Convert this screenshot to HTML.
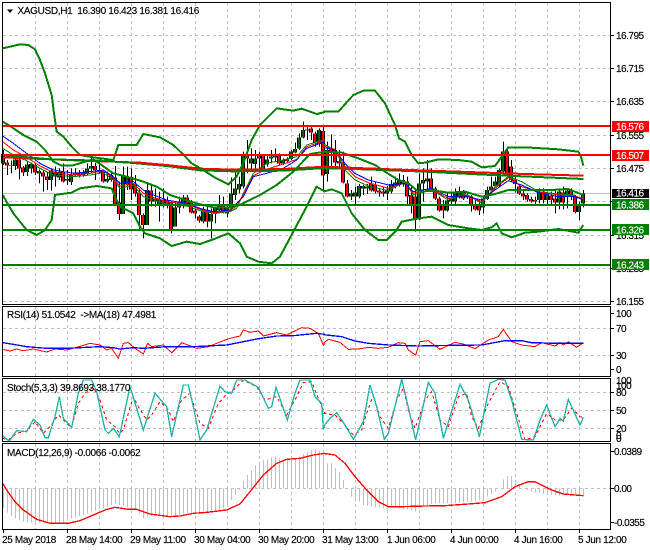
<!DOCTYPE html>
<html><head><meta charset="utf-8"><title>XAGUSD,H1</title>
<style>
html,body{margin:0;padding:0;background:#fff;width:650px;height:550px;overflow:hidden}
svg{display:block}
text{font-family:"Liberation Sans",sans-serif;font-size:10px;letter-spacing:-.5px;fill:#000;stroke:#000;stroke-width:.15px}
.d text{letter-spacing:-.35px}
.h text{letter-spacing:-.33px}
.w text{fill:#fff;stroke:#fff}
</style></head><body>
<svg width="650" height="550" viewBox="0 0 650 550" xmlns="http://www.w3.org/2000/svg">
<defs>
<path id="gb" d="M15.5 478V498M27.5 494V516M31.5 492V505M39.5 513V520M51.5 512V540M55.5 515V530M59.5 516V533M67.5 537V542M71.5 525V546M79.5 520V527M83.5 518V525M87.5 505V522M91.5 498V506M107.5 537V545M111.5 525V540M123.5 528V642M127.5 530V552M147.5 570V675M159.5 598V612M175.5 622V680M179.5 605V622M183.5 592V612M203.5 632V665M211.5 642V665M215.5 625V642M219.5 615V630M227.5 620V640M231.5 580V620M235.5 565V585M239.5 552V568M243.5 465V560M251.5 475V490M255.5 475V492M267.5 478V493M271.5 470V475M275.5 463V473M283.5 480V490M291.5 455V477M295.5 447V457M299.5 412V445M303.5 390V412M319.5 390V432M327.5 450V522M351.5 580V590M355.5 578V590M359.5 558V590M363.5 558V565M367.5 560V566M387.5 568V580M391.5 552V575M395.5 548V560M399.5 540V555M403.5 540V553M419.5 550V658M423.5 540V550M427.5 535V545M447.5 602V632M451.5 592V605M455.5 578V605M459.5 576V592M483.5 595V622M487.5 570V597M491.5 560V572M495.5 545V558M499.5 510V556M503.5 455V515M539.5 575V600M547.5 580V600M559.5 575V608M567.5 572V590M579.5 612V636M583.5 580V610"/>
<path id="rb" d="M3.5 462V490M7.5 488V496M11.5 495V497M19.5 478V506M23.5 503V517M35.5 495V518M43.5 517V530M47.5 530V540M63.5 514V544M75.5 518V525M95.5 498V510M99.5 510V517M103.5 514V545M115.5 533V612M119.5 607V642M131.5 531V568M135.5 550V580M139.5 578V645M143.5 645V675M151.5 572V605M155.5 595V605M163.5 598V612M167.5 600V610M171.5 607V692M187.5 592V610M191.5 608V638M195.5 632V640M199.5 650V662M207.5 637V665M223.5 618V635M247.5 463V475M259.5 468V475M263.5 468V508M279.5 462V490M287.5 478V483M307.5 388V392M311.5 385V398M315.5 400V428M323.5 393V527M331.5 448V458M335.5 450V488M339.5 483V490M343.5 490V548M347.5 550V590M371.5 550V572M375.5 555V575M379.5 572V578M383.5 575V580M407.5 545V590M411.5 585V618M415.5 590V660M431.5 535V568M435.5 565V595M439.5 595V632M443.5 618V632M463.5 575V595M467.5 585V592M471.5 590V618M475.5 618V628M479.5 618V632M507.5 455V525M511.5 500V540M515.5 538V552M519.5 560V580M523.5 580V590M527.5 585V598M531.5 597V605M535.5 600V605M543.5 575V600M551.5 588V600M555.5 595V608M563.5 578V608M571.5 572V588M575.5 590V636"/>
</defs>
<rect width="650" height="550" fill="#fff"/>
<!-- grid -->
<g stroke="#c0c0c0" stroke-width="1" stroke-dasharray="3 3" fill="none" shape-rendering="crispEdges">
<path d="M35.5 3V304M67.5 3V304M99.5 3V304M131.5 3V304M163.5 3V304M195.5 3V304M227.5 3V304M259.5 3V304M291.5 3V304M323.5 3V304M355.5 3V304M387.5 3V304M419.5 3V304M451.5 3V304M483.5 3V304M515.5 3V304M547.5 3V304M579.5 3V304"/>
<path d="M35.5 307V376M67.5 307V376M99.5 307V376M131.5 307V376M163.5 307V376M195.5 307V376M227.5 307V376M259.5 307V376M291.5 307V376M323.5 307V376M355.5 307V376M387.5 307V376M419.5 307V376M451.5 307V376M483.5 307V376M515.5 307V376M547.5 307V376M579.5 307V376"/>
<path d="M35.5 379V441M67.5 379V441M99.5 379V441M131.5 379V441M163.5 379V441M195.5 379V441M227.5 379V441M259.5 379V441M291.5 379V441M323.5 379V441M355.5 379V441M387.5 379V441M419.5 379V441M451.5 379V441M483.5 379V441M515.5 379V441M547.5 379V441M579.5 379V441"/>
<path d="M35.5 444V529M67.5 444V529M99.5 444V529M131.5 444V529M163.5 444V529M195.5 444V529M227.5 444V529M259.5 444V529M291.5 444V529M323.5 444V529M355.5 444V529M387.5 444V529M419.5 444V529M451.5 444V529M483.5 444V529M515.5 444V529M547.5 444V529M579.5 444V529"/>
<path d="M3 35.5H610M3 68.5H610M3 101.5H610M3 135.5H610M3 168.5H610M3 201.5H610M3 235.5H610M3 268.5H610M3 301.5H610"/>
<path d="M3 328.5H610M3 355.5H610"/>
<path d="M3 392.5H610M3 410.5H610M3 428.5H610"/>
<path d="M3 488.5H610"/>
</g>
<!-- bid line -->
<path d="M3 193.5H610" stroke="#c0c0c0" shape-rendering="crispEdges"/>
<!-- candles -->
<g transform="scale(1,.33333)" fill="none" shape-rendering="crispEdges">
<path stroke="#000" stroke-width="1" d="M3.5 450V495M7.5 480V525M11.5 482V520M15.5 470V510M19.5 472V538M23.5 498V528M27.5 485V528M31.5 488V520M35.5 490V525M39.5 508V550M43.5 510V575M47.5 515V570M51.5 505V572M55.5 500V560M59.5 505V540M63.5 490V547M67.5 510V555M71.5 505V555M75.5 505V530M79.5 510V532M83.5 510V530M87.5 490V526M91.5 470V520M95.5 488V540M99.5 480V520M103.5 512V548M107.5 515V548M111.5 520V545M115.5 498V614M119.5 545V660M123.5 500V640M127.5 500V570M131.5 505V600M135.5 525V590M139.5 565V690M143.5 640V715M147.5 548V675M151.5 555V620M155.5 565V620M159.5 575V665M163.5 565V622M167.5 590V625M171.5 605V700M175.5 605V680M179.5 590V640M183.5 585V625M187.5 585V615M191.5 600V640M195.5 625V655M199.5 645V668M203.5 620V670M207.5 620V682M211.5 625V715M215.5 620V670M219.5 585V640M223.5 590V640M227.5 612V652M231.5 532V622M235.5 510V600M239.5 530V580M243.5 455V565M247.5 420V520M251.5 445V515M255.5 450V505M259.5 455V505M263.5 462V515M267.5 465V500M271.5 450V490M275.5 445V485M279.5 460V495M283.5 475V495M287.5 472V490M291.5 450V480M295.5 428V460M299.5 400V450M303.5 365V415M307.5 378V420M311.5 378V420M315.5 395V440M319.5 385V440M323.5 380V575M327.5 425V545M331.5 403V505M335.5 420V505M339.5 450V500M343.5 455V550M347.5 540V592M351.5 570V600M355.5 560V612M359.5 552V595M363.5 555V585M367.5 552V582M371.5 530V575M375.5 545V580M379.5 565V590M383.5 560V590M387.5 558V600M391.5 540V580M395.5 530V565M399.5 520V560M403.5 525V560M407.5 530V612M411.5 560V640M415.5 570V695M419.5 520V660M423.5 505V605M427.5 480V575M431.5 505V570M435.5 560V600M439.5 590V635M443.5 600V655M447.5 575V635M451.5 575V612M455.5 565V615M459.5 560V595M463.5 570V600M467.5 580V597M471.5 585V635M475.5 600V632M479.5 600V645M483.5 590V640M487.5 560V600M491.5 530V575M495.5 530V560M499.5 505V560M503.5 425V525M507.5 440V530M511.5 480V545M515.5 530V578M519.5 555V585M523.5 570V600M527.5 580V605M531.5 590V608M535.5 590V612M539.5 565V610M543.5 565V610M547.5 575V612M551.5 575V612M555.5 570V640M559.5 565V628M563.5 560V628M567.5 565V625M571.5 565V600M575.5 585V640M579.5 605V660M583.5 570V622"/>
<g transform="translate(-.5,0)">
<use href="#gb" stroke="#000" stroke-width="4"/>
<use href="#rb" stroke="#000" stroke-width="4"/>
<use href="#gb" stroke="#006400" stroke-width="2"/>
<use href="#rb" stroke="#ff0000" stroke-width="2"/>
</g>
</g>
<!-- thin MAs left -->
<g transform="scale(.33333)" fill="none" stroke-width="3" shape-rendering="crispEdges">
<polyline stroke="#008000" points="8,445 40,465 80,482 120,505 160,525 220,530 270,525 310,518 340,540 360,565 400,555 430,590 460,600 500,612 560,618 600,632 640,640 690,635 710,625 730,580 760,520 800,490 850,480 890,470 920,435 975,418"/>
<polyline stroke="#ff0000" points="8,425 40,450 80,472 120,498 160,517 220,525 270,520 310,512 340,535 360,558 400,550 430,580 460,592 500,605 560,612 600,628 640,638 690,632 710,618 730,583 760,527 800,508 850,492 890,478 920,440 975,422"/>
<polyline stroke="#0000ff" points="8,408 40,430 80,460 120,490 160,510 220,520 270,515 310,510 340,530 360,550 400,545 430,570 460,585 500,600 560,610 600,625 640,635 690,630 710,610 730,590 760,530 800,520 850,505 890,480 920,445 975,425"/>
</g>
<g transform="translate(325,0) scale(.33333)" fill="none" stroke-width="3" shape-rendering="crispEdges">
<polyline stroke="#008000" points="-5,432 30,450 60,510 90,540 130,558 190,572 240,545 265,585 320,570 370,600 420,580 470,610 510,560 550,530 590,545 640,575 700,582 750,585"/>
<polyline stroke="#ff0000" points="-5,438 30,448 60,500 90,530 130,548 190,565 240,548 265,580 320,568 370,595 420,585 470,605 510,565 550,533 590,560 640,575 700,585 750,588 775,596"/>
<polyline stroke="#0000ff" points="-5,442 30,450 60,490 90,520 130,540 190,555 240,550 265,575 320,565 370,590 420,588 470,600 510,570 550,542 590,555 640,578 700,590 750,590 775,600"/>
</g>
<!-- long MA + bands -->
<g transform="scale(.33333)" fill="none" stroke-width="6" shape-rendering="crispEdges">
<polyline stroke="#ff0000" points="8,472 200,480 420,488 500,495 600,506 700,510 850,507 975,500"/>
<polyline stroke="#008000" points="8,465 150,478 300,482 400,489 500,498 600,511 700,514 850,512 975,504"/>
<polyline stroke="#ff0000" points="400,487 500,495 600,506 700,509 780,508"/>
<polyline stroke="#008000" points="8,145 30,140 60,133 85,135 105,148 120,180 135,220 155,285 162,340 170,395 190,410 215,440 240,465 280,472 340,480 355,435 410,435 430,402 480,412 520,435 548,462 575,490 610,510 640,530 685,553 710,530 730,490 755,420 780,375 830,325 880,332 905,326 950,342 975,336"/>
<polyline stroke="#008000" points="8,365 30,378 70,405 110,425 135,450 160,485 185,497 215,497 280,478 340,520 380,530 430,545 470,560 510,585 550,598 590,610 640,622 700,622 730,610 780,585 830,555 880,515 930,462 975,455"/>
<polyline stroke="#008000" points="8,585 40,640 80,690 110,705 135,690 155,660 165,585 185,582 215,578 240,565 290,558 335,565 345,590 360,620 400,640 420,680 435,700 480,715 515,738 560,725 600,732 640,718 685,700 720,730 740,770 775,785 815,790 840,770 880,695 920,620 950,560 975,575"/>
</g>
<g transform="translate(325,0) scale(.33333)" fill="none" stroke-width="6" shape-rendering="crispEdges">
<polyline stroke="#ff0000" points="-5,500 120,505 250,510 400,515 600,522 775,527"/>
<polyline stroke="#008000" points="-5,505 120,508 300,515 500,525 775,537"/>
<polyline stroke="#ff0000" points="-5,500 120,505 250,510 320,512"/>
<polyline stroke="#008000" points="-5,335 40,335 85,285 115,272 150,272 180,310 210,375 222,415 240,425 260,465 280,490 300,488 340,478 400,480 440,485 470,502 510,498 530,470 550,442 600,442 700,448 760,455 768,470 775,497"/>
<polyline stroke="#008000" points="-5,455 50,458 100,475 150,495 180,515 220,540 250,550 280,575 330,572 370,578 420,575 470,590 510,582 550,570 620,570 680,570 730,567 775,585"/>
<polyline stroke="#008000" points="-5,575 20,568 50,580 80,640 120,690 160,720 185,720 215,690 230,665 280,655 320,650 370,675 430,685 470,690 500,682 515,670 530,700 560,712 600,698 640,695 700,687 760,698 775,675"/>
</g>
<!-- horizontal levels -->
<g shape-rendering="crispEdges">
<rect x="3" y="125" width="607" height="2" fill="#ff0000"/>
<rect x="3" y="154" width="607" height="2" fill="#ff0000"/>
<rect x="3" y="204" width="607" height="2" fill="#008000"/>
<rect x="3" y="229" width="607" height="2" fill="#008000"/>
<rect x="3" y="264" width="607" height="2" fill="#008000"/>
</g>
<!-- RSI -->
<g transform="translate(0,300) scale(.33333)" fill="none" stroke-width="3" shape-rendering="crispEdges">
<polyline stroke="#ff0000" points="8,148 30,153 50,147 70,152 100,147 140,156 165,147 200,150 230,142 270,130 300,135 320,150 335,145 355,175 370,130 385,128 405,145 430,162 443,130 455,140 490,135 515,158 545,128 590,145 625,140 655,128 690,115 720,108 730,90 750,97 775,93 790,108 830,98 860,105 905,83 930,85 955,100 970,135 975,130"/>
<polyline stroke="#0000ff" stroke-width="4" points="8,128 40,133 80,140 140,145 200,145 300,140 340,143 360,147 400,143 430,145 500,140 580,140 680,135 730,125 770,117 830,108 880,107 950,100 975,103"/>
</g>
<g transform="translate(325,300) scale(.33333)" fill="none" stroke-width="3" shape-rendering="crispEdges">
<polyline stroke="#ff0000" points="-5,130 10,118 45,127 70,148 100,147 130,142 160,145 190,142 220,128 240,130 250,150 272,165 285,125 310,122 345,148 390,127 415,132 450,146 490,120 520,110 535,88 560,125 590,135 630,140 650,128 690,138 705,128 715,135 730,125 755,142 775,128"/>
<polyline stroke="#0000ff" stroke-width="4" points="-5,104 50,110 90,123 130,130 190,135 280,138 380,136 470,135 540,122 590,122 620,128 700,130 775,130"/>
</g>
<!-- Stoch -->
<g transform="translate(0,300) scale(.33333)" fill="none" shape-rendering="crispEdges">
<polyline stroke="#ff0000" stroke-width="3" stroke-dasharray="9 9" points="8,415 25,420 50,400 80,393 105,365 130,400 150,380 175,345 205,375 215,380 235,310 255,280 280,262 300,300 320,360 345,380 358,400 370,390 400,290 415,320 440,360 455,345 480,305 505,330 520,365 545,300 570,280 600,370 625,385 655,310 680,283 700,270 730,240 770,260 795,300 830,290 860,345 890,290 910,248 935,245 965,320 975,340"/>
<polyline stroke="#20b2aa" stroke-width="4" points="8,408 28,423 50,392 80,395 100,358 120,375 135,413 145,413 165,350 178,290 190,355 215,382 235,280 250,240 275,240 290,275 315,390 325,400 340,385 358,410 390,260 430,390 465,280 500,320 515,410 550,255 565,255 580,320 600,420 620,390 660,258 675,275 695,280 710,240 735,240 775,262 805,325 815,320 828,262 862,360 885,280 900,240 930,240 945,290 965,310 970,385 975,380"/>
</g>
<g transform="translate(325,300) scale(.33333)" fill="none" shape-rendering="crispEdges">
<polyline stroke="#ff0000" stroke-width="3" stroke-dasharray="9 9" points="-5,340 30,345 55,370 85,405 110,390 125,340 145,285 165,350 190,385 215,300 235,265 250,330 270,385 300,300 320,275 345,360 370,380 400,290 425,280 440,350 460,385 490,310 525,245 550,260 575,340 600,420 630,410 665,340 690,360 715,360 740,325 765,350 775,352"/>
<polyline stroke="#20b2aa" stroke-width="4" points="-5,380 15,355 35,338 60,375 85,418 115,365 135,255 155,320 178,418 190,400 230,238 245,300 272,420 310,247 330,280 355,415 405,253 430,300 463,410 495,250 520,238 540,240 560,300 590,418 625,420 645,360 665,315 690,380 705,355 715,363 730,298 765,375 775,352"/>
</g>
<!-- MACD hist -->
<g transform="translate(0,300) scale(1,.33333)" fill="none" stroke="#c0c0c0" shape-rendering="crispEdges">
<path d="M3.5 565V625M7.5 565V638M11.5 565V648M15.5 565V655M19.5 565V660M23.5 565V665M27.5 565V668M31.5 565V668M35.5 565V668M39.5 565V668M43.5 565V668M47.5 565V670M51.5 565V670M55.5 565V670M59.5 565V668M63.5 565V668M67.5 565V662M71.5 565V655M75.5 565V652M79.5 565V648M83.5 565V645M87.5 565V640M91.5 565V635M95.5 565V632M99.5 565V625M103.5 565V625M107.5 565V620M111.5 565V615M115.5 565V610M119.5 565V615M123.5 565V618M127.5 565V622M131.5 565V625M135.5 565V630M139.5 565V640M143.5 565V655M147.5 565V650M151.5 565V648M155.5 565V645M159.5 565V645M163.5 565V645M167.5 565V648M171.5 565V650M175.5 565V650M179.5 565V645M183.5 565V640M187.5 565V640M191.5 565V640M195.5 565V640M199.5 565V642M203.5 565V640M207.5 565V637M211.5 565V635M215.5 565V632M219.5 565V630M223.5 565V625M227.5 565V615M231.5 565V600M235.5 565V585M239.5 565V570M243.5 565V543M247.5 565V525M251.5 565V510M255.5 565V495M259.5 565V485M263.5 565V480M267.5 565V478M271.5 565V472M275.5 565V470M279.5 565V475M283.5 565V478M287.5 565V478M291.5 565V478M295.5 565V478M299.5 565V470M303.5 565V462M307.5 565V455M311.5 565V450M315.5 565V448M319.5 565V452M323.5 565V458M327.5 565V490M331.5 565V490M335.5 565V505M339.5 565V515M343.5 565V540M351.5 565V590M355.5 565V600M359.5 565V605M363.5 565V615M367.5 565V618M371.5 565V620M375.5 565V622M379.5 565V622M383.5 565V625M387.5 565V628M391.5 565V620M395.5 565V622M399.5 565V625M403.5 565V628M407.5 565V628M411.5 565V630M415.5 565V635M419.5 565V625M423.5 565V620M427.5 565V618M431.5 565V612M435.5 565V610M439.5 565V610M443.5 565V610M447.5 565V610M451.5 565V610M455.5 565V610M459.5 565V608M463.5 565V607M467.5 565V605M471.5 565V605M475.5 565V603M479.5 565V600M483.5 565V595M487.5 565V590M491.5 565V580M495.5 565V575M503.5 565V538M507.5 565V528M511.5 565V528M515.5 565V540M519.5 565V555M527.5 565V570M531.5 565V575M535.5 565V578M539.5 565V578M543.5 565V582M547.5 565V582M551.5 565V585M555.5 565V585M559.5 565V587M563.5 565V585M567.5 565V585M571.5 565V585M575.5 565V585M579.5 565V590M583.5 565V587"/>
</g>
<g transform="translate(0,300) scale(.33333)" fill="none" stroke="#ff0000" stroke-width="4" shape-rendering="crispEdges">
<polyline points="8,550 20,570 45,605 70,630 110,658 150,670 205,670 240,662 280,645 320,628 345,622 385,628 410,628 450,642 510,650 540,648 580,640 620,637 680,630 720,612 750,575 790,525 830,490 860,478 900,475 940,465 975,460"/>
</g>
<g transform="translate(325,300) scale(.33333)" fill="none" stroke="#ff0000" stroke-width="4" shape-rendering="crispEdges">
<polyline points="-5,460 30,465 60,490 90,530 125,570 160,605 190,620 230,620 300,618 360,617 430,612 480,608 530,590 570,560 610,545 630,545 680,570 715,582 750,585 775,587"/>
</g>
<!-- frames -->
<g fill="none" stroke="#000" stroke-width="1" shape-rendering="crispEdges">
<path d="M2.5 2.5H610.5V304.5H2.5Z"/>
<path d="M2.5 306.5H610.5V376.5H2.5Z"/>
<path d="M2.5 378.5H610.5V441.5H2.5Z"/>
<path d="M2.5 443.5H610.5V529.5H2.5Z"/>
<path d="M611 35.5h3M611 68.5h3M611 101.5h3M611 135.5h3M611 168.5h3M611 201.5h3M611 235.5h3M611 268.5h3M611 301.5h3M611 313.5h3M611 328.5h3M611 355.5h3M611 369.5h3M611 392.5h3M611 410.5h3M611 428.5h3M611 451.5h3M611 488.5h3M611 522.5h3"/>
<path d="M3.5 530v3M67.5 530v3M131.5 530v3M195.5 530v3M259.5 530v3M323.5 530v3M387.5 530v3M451.5 530v3M515.5 530v3M579.5 530v3"/>
</g>
<!-- header -->
<path d="M7 9.5h6l-3 3.5z" fill="#000"/>
<g class="h">
<text x="17.5" y="14">XAGUSD,H1 &#160;16.390 16.423 16.381 16.416</text>
<text x="7" y="318">RSI(14) 51.0542 &#160;-&gt;MA(18) 47.4981</text>
<text x="7" y="391">Stoch(5,3,3) 39.8693 38.1770</text>
<text x="7" y="456">MACD(12,26,9) -0.0066 -0.0062</text>
</g>
<!-- price axis -->
<text x="616" y="39">16.795</text>
<text x="616" y="72">16.715</text>
<text x="616" y="105">16.635</text>
<text x="616" y="139">16.555</text>
<text x="616" y="172">16.475</text>
<text x="616" y="239">16.315</text>
<text x="616" y="272">16.235</text>
<text x="616" y="305">16.155</text>
<text x="616" y="317">100</text>
<text x="616" y="332">70</text>
<text x="616" y="359">30</text>
<text x="616" y="373">0</text>
<text x="616" y="384">100</text>
<text x="616" y="389">100</text>
<text x="616" y="396">80</text>
<text x="616" y="414">50</text>
<text x="616" y="432">20</text>
<text x="616" y="439">0</text>
<text x="616" y="442">0</text>
<text x="614" y="455">0.0389</text>
<text x="614" y="492">0.00</text>
<text x="614" y="526">-0.0355</text>
<!-- price labels -->
<g shape-rendering="crispEdges">
<rect x="612" y="121" width="37" height="11" fill="#ff0000"/>
<rect x="612" y="150" width="37" height="11" fill="#ff0000"/>
<rect x="612" y="189" width="37" height="9" fill="#000"/>
<rect x="612" y="199" width="37" height="11" fill="#008000"/>
<rect x="612" y="224" width="37" height="11" fill="#008000"/>
<rect x="612" y="259" width="37" height="11" fill="#008000"/>
</g>
<g class="w">
<text x="616" y="130">16.576</text>
<text x="616" y="159">16.507</text>
<text x="616" y="196.5">16.416</text>
<text x="616" y="208.5">16.386</text>
<text x="616" y="233.5">16.326</text>
<text x="616" y="268.5">16.243</text>
</g>
<!-- time axis -->
<g class="d">
<text x="2" y="543">25 May 2018</text>
<text x="66" y="543">28 May 14:00</text>
<text x="130" y="543">29 May 11:00</text>
<text x="194" y="543">30 May 04:00</text>
<text x="258" y="543">30 May 20:00</text>
<text x="322" y="543">31 May 13:00</text>
<text x="387" y="543">1 Jun 06:00</text>
<text x="450" y="543">4 Jun 00:00</text>
<text x="514" y="543">4 Jun 16:00</text>
<text x="578" y="543">5 Jun 12:00</text>
</g>
</svg>
</body></html>
